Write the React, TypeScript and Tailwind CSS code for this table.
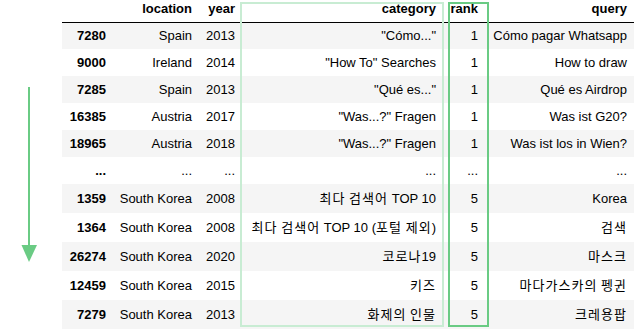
import React from "react";

type Row = { idx: string; loc: string; year: string; cat: string; rank: string; q: string; tall?: boolean };

const rows: Row[] = [
  { idx: "7280", loc: "Spain", year: "2013", cat: "\"Cómo...\"", rank: "1", q: "Cómo pagar Whatsapp" },
  { idx: "9000", loc: "Ireland", year: "2014", cat: "\"How To\" Searches", rank: "1", q: "How to draw" },
  { idx: "7285", loc: "Spain", year: "2013", cat: "\"Qué es...\"", rank: "1", q: "Qué es Airdrop" },
  { idx: "16385", loc: "Austria", year: "2017", cat: "\"Was...?\" Fragen", rank: "1", q: "Was ist G20?" },
  { idx: "18965", loc: "Austria", year: "2018", cat: "\"Was...?\" Fragen", rank: "1", q: "Was ist los in Wien?" },
  { idx: "...", loc: "...", year: "...", cat: "...", rank: "...", q: "..." },
  { idx: "1359", loc: "South Korea", year: "2008", cat: "최다 검색어 TOP 10", rank: "5", q: "Korea", tall: true },
  { idx: "1364", loc: "South Korea", year: "2008", cat: "최다 검색어 TOP 10 (포털 제외)", rank: "5", q: "검색", tall: true },
  { idx: "26274", loc: "South Korea", year: "2020", cat: "코로나19", rank: "5", q: "마스크", tall: true },
  { idx: "12459", loc: "South Korea", year: "2015", cat: "키즈", rank: "5", q: "마다가스카의 펭귄", tall: true },
  { idx: "7279", loc: "South Korea", year: "2013", cat: "화제의 인물", rank: "5", q: "크레용팝", tall: true },
];

function Txt({ s }: { s: string }) {
  const parts = s.split(/([\uAC00-\uD7A3]+)/);
  return (
    <>
      {parts.map((p, i) =>
        /[\uAC00-\uD7A3]/.test(p) ? (
          <span key={i} className="tracking-[1.04px]">{p}</span>
        ) : (
          <React.Fragment key={i}>{p}</React.Fragment>
        )
      )}
    </>
  );
}

export default function App() {
  return (
    <div
      className="relative w-[636px] h-[332px] overflow-hidden bg-white text-black flex"
      style={{ fontFamily: '"Liberation Sans", Arial, "Noto Sans CJK KR", sans-serif' }}
    >
      <div className="w-[62px] shrink-0 relative">
        <svg width="62" height="332" className="absolute left-0 top-0">
          <rect x="28" y="87" width="2" height="160" fill="#6acb84" />
          <polygon points="21.5,245 37,245 29,262" fill="#6acb84" />
        </svg>
      </div>
      <table className="table-fixed border-collapse text-[13px] leading-[15px] w-[572px] shrink-0 self-start">
        <colgroup>
          <col className="w-[50px]" />
          <col className="w-[86px]" />
          <col className="w-[43px]" />
          <col className="w-[201px]" />
          <col className="w-[42px]" />
          <col className="w-[150px]" />
        </colgroup>
        <thead className="border-b border-black">
          <tr className="h-[22px]">
            <th className="pr-[6px] pt-[1px] align-top text-right font-bold"></th>
            <th className="pr-[6px] pt-[1px] align-top text-right font-bold">location</th>
            <th className="pr-[6px] pt-[1px] align-top text-right font-bold">year</th>
            <th className="pr-[6px] pt-[1px] align-top text-right font-bold">category</th>
            <th className="pr-[6px] pt-[1px] align-top text-right font-bold">rank</th>
            <th className="pr-[7px] pt-[1px] align-top text-right font-bold">query</th>
          </tr>
        </thead>
        <tbody>
          {rows.map((r, i) => (
            <tr key={i} className={i % 2 === 0 ? "bg-[#f5f5f5]" : "bg-white"}>
              <td className={`${r.tall ? "h-[29px]" : "h-[27px]"} p-0 pr-[6px] align-middle text-right font-bold whitespace-nowrap`}>{r.idx}</td>
              <td className="p-0 pr-[6px] align-middle text-right whitespace-nowrap">{r.loc}</td>
              <td className="p-0 pr-[6px] align-middle text-right whitespace-nowrap">{r.year}</td>
              <td className="p-0 pr-[6px] align-middle text-right whitespace-nowrap"><Txt s={r.cat} /></td>
              <td className="p-0 pr-[6px] align-middle text-right whitespace-nowrap">{r.rank}</td>
              <td className="p-0 pr-[7px] align-middle text-right whitespace-nowrap"><Txt s={r.q} /></td>
            </tr>
          ))}
        </tbody>
      </table>
      <div className="absolute left-[240px] top-[2px] w-[204px] h-[325px] border-2 border-[#c8ecd3] pointer-events-none" />
      <div className="absolute left-[448px] top-[2px] w-[41px] h-[325px] border-2 border-[#6acb84] pointer-events-none" />
    </div>
  );
}
